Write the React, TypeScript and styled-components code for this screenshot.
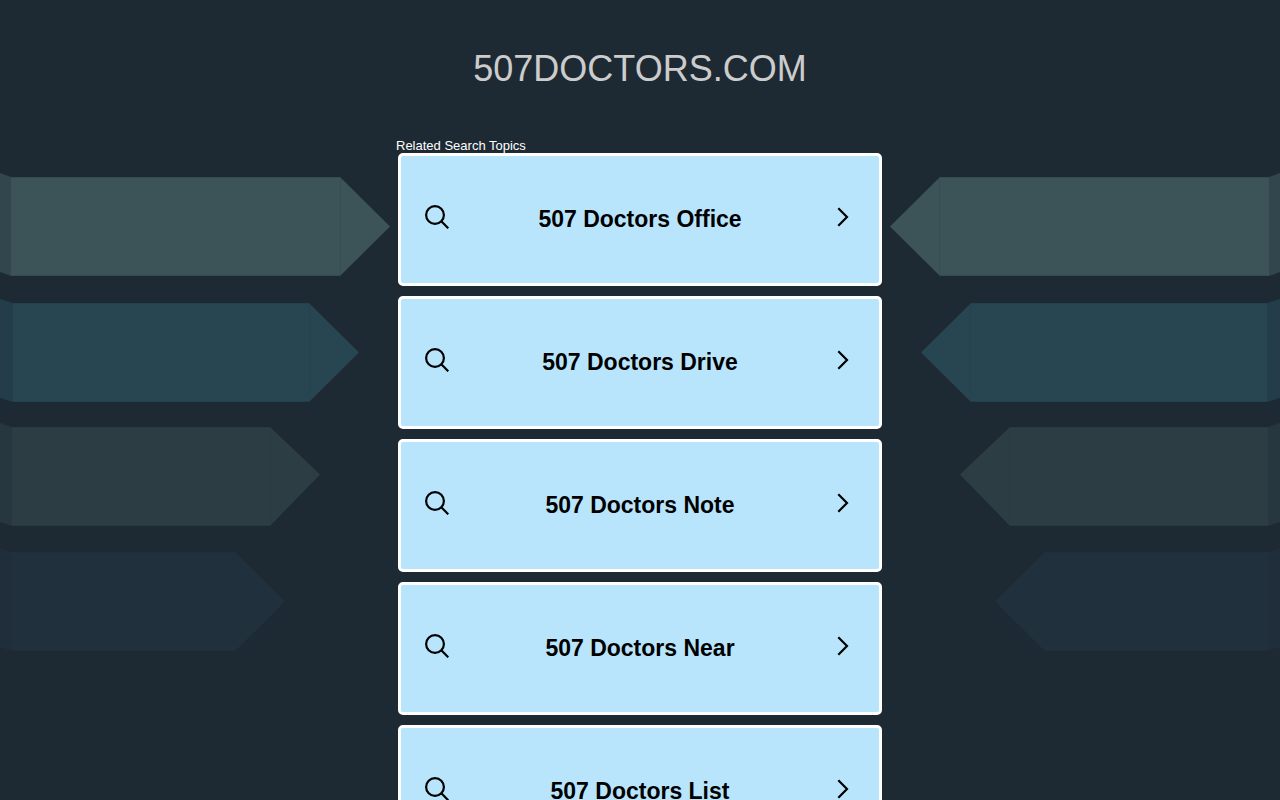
import React from "react";
import styled, { createGlobalStyle } from "styled-components";

const GlobalStyle = createGlobalStyle`
  *, *::before, *::after { box-sizing: border-box; }
  body {
    margin: 0;
    background: #1e2a33;
    font-family: "Liberation Sans", Arial, sans-serif;
  }
`;

const Page = styled.div`
  position: relative;
  overflow: hidden;
  padding: 48px 16px 24px;
`;

const Ribbons = styled.svg<{ $side: "left" | "right" }>`
  position: absolute;
  top: 160px;
  ${({ $side }) => $side}: 0;
  transform: ${({ $side }) => ($side === "right" ? "scaleX(-1)" : "none")};
  pointer-events: none;
`;

const Header = styled.header`
  text-align: center;
`;

const Title = styled.h1`
  margin: 0;
  color: #cccccc;
  font-size: 36px;
  font-weight: 400;
  line-height: 42px;
`;

const Topics = styled.main`
  position: relative;
  max-width: 488px;
  margin: 48px auto 0;
`;

const TopicsLabel = styled.h2`
  margin: 0;
  color: #ffffff;
  font-size: 13px;
  font-weight: 400;
  line-height: 15px;
`;

const TopicList = styled.ul`
  display: flex;
  flex-direction: column;
  gap: 10px;
  margin: 0;
  padding: 0 2px;
  list-style: none;
`;

const TopicLink = styled.a`
  display: flex;
  align-items: center;
  padding: 49px 24px 50px;
  border: 3px solid #ffffff;
  border-radius: 5px;
  background: #b8e5fc;
  color: #000000;
  text-decoration: none;
`;

const TopicText = styled.span`
  flex: 1;
  text-align: center;
  font-size: 23px;
  font-weight: 700;
  line-height: 26px;
`;

const Icon = styled.svg`
  flex: none;
  width: 24px;
  height: 24px;
  margin-bottom: 4px;
  fill: none;
  stroke: #000000;
  stroke-width: 2.2;
`;

const topics = [
  "507 Doctors Office",
  "507 Doctors Drive",
  "507 Doctors Note",
  "507 Doctors Near",
  "507 Doctors List",
];

const ribbons = [
  { top: 17, fold: 11, shoulder: 340, tip: 390, mid: 66.5, color: "#3c5458", shade: "#32464e" },
  { top: 143, fold: 13, shoulder: 309, tip: 359, mid: 192.5, color: "#284552", shade: "#243d4a" },
  { top: 267, fold: 12, shoulder: 270, tip: 320, mid: 314.5, color: "#2c3e44", shade: "#27373f" },
  { top: 392, fold: 12, shoulder: 235, tip: 285, mid: 441.5, color: "#20313d", shade: "#1f2e3a" },
];

function RibbonArt({ side }: { side: "left" | "right" }) {
  return (
    <Ribbons $side={side} width="390" height="500" viewBox="0 0 390 500" aria-hidden="true">
      {ribbons.map(({ top, fold, shoulder, tip, mid, color, shade }) => {
        const bottom = top + 99;
        return (
          <g key={top}>
            <path d={`M0 ${top - 4}L${fold} ${top}V${bottom}L0 ${bottom - 4}Z`} fill={shade} />
            <path
              d={`M${fold} ${top}H${shoulder}L${tip} ${mid}L${shoulder} ${bottom}H${fold}Z`}
              fill={color}
            />
            <path d={`M${fold} ${top + 0.5}H${shoulder}M${fold} ${bottom - 0.5}H${shoulder}`} stroke={shade} strokeOpacity="0.7" />
            <path d={`M${shoulder + 0.5} ${top + 1}V${bottom - 1}`} stroke={shade} strokeOpacity="0.35" />
          </g>
        );
      })}
    </Ribbons>
  );
}

function SearchIcon() {
  return (
    <Icon viewBox="0 0 24 24" aria-hidden="true">
      <circle cx="10" cy="10" r="8.9" />
      <path d="M16.3 16.3L23.3 23.3" />
    </Icon>
  );
}

function ChevronIcon() {
  return (
    <Icon viewBox="0 0 24 24" aria-hidden="true">
      <path d="M7.3 3.3L16 12L7.3 20.7" />
    </Icon>
  );
}

export default function App() {
  return (
    <>
      <GlobalStyle />
      <Page>
        <RibbonArt side="left" />
        <RibbonArt side="right" />
        <Header>
          <Title>507DOCTORS.COM</Title>
        </Header>
        <Topics>
          <TopicsLabel>Related Search Topics</TopicsLabel>
          <TopicList>
            {topics.map((topic) => (
              <li key={topic}>
                <TopicLink href="#">
                  <SearchIcon />
                  <TopicText>{topic}</TopicText>
                  <ChevronIcon />
                </TopicLink>
              </li>
            ))}
          </TopicList>
        </Topics>
      </Page>
    </>
  );
}
